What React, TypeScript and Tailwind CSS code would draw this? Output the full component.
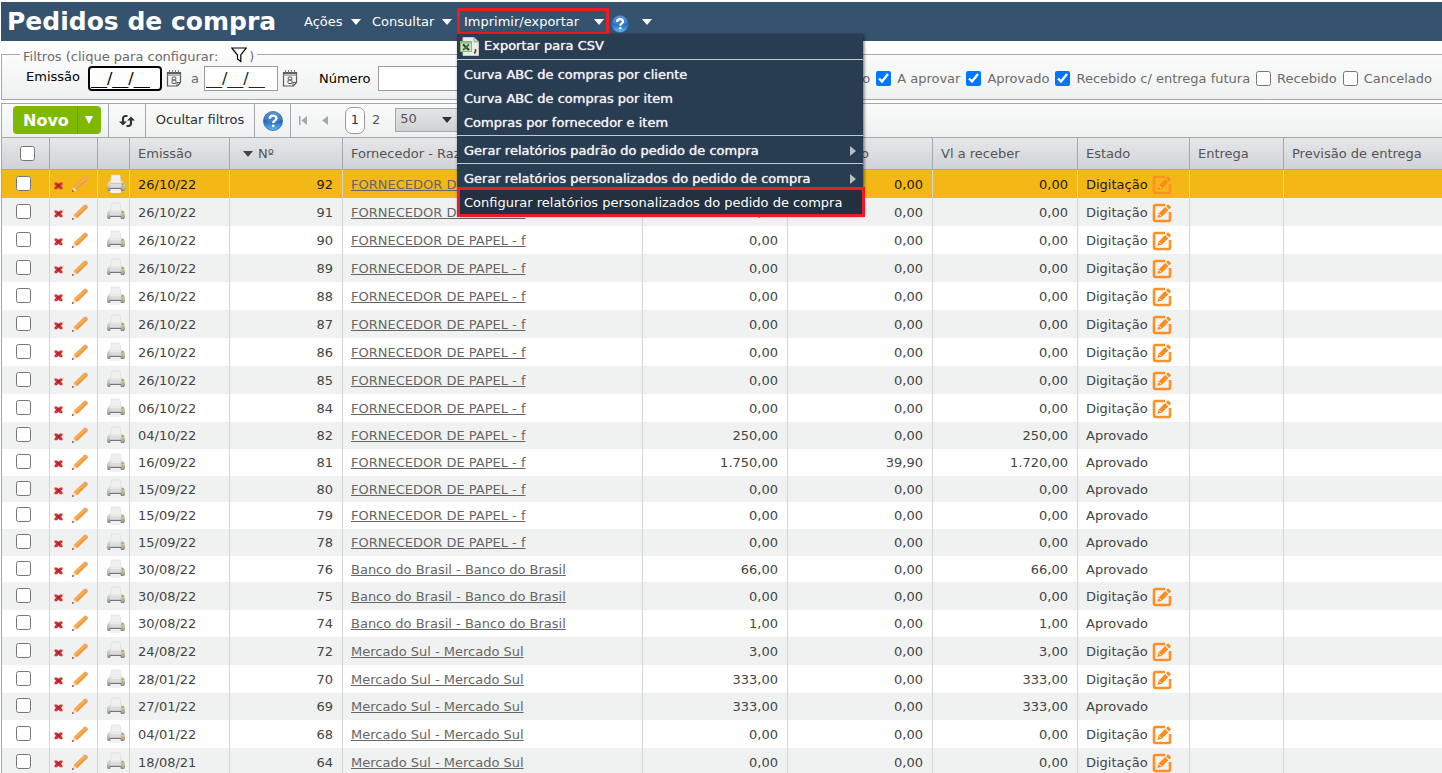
import { useState } from 'react'

interface Order {
  date: string
  number: number
  supplier: string
  total: string
  received: string
  pending: string
  status: 'Digitação' | 'Aprovado'
}

const PAPEL = 'FORNECEDOR DE PAPEL - f'
const BANCO = 'Banco do Brasil - Banco do Brasil'
const MERCADO = 'Mercado Sul - Mercado Sul'

const order = (
  date: string,
  number: number,
  supplier: string,
  status: Order['status'],
  total = '0,00',
  received = '0,00',
  pending = total
): Order => ({ date, number, supplier, total, received, pending, status })

const orders: Order[] = [
  order('26/10/22', 92, PAPEL, 'Digitação'),
  order('26/10/22', 91, PAPEL, 'Digitação'),
  order('26/10/22', 90, PAPEL, 'Digitação'),
  order('26/10/22', 89, PAPEL, 'Digitação'),
  order('26/10/22', 88, PAPEL, 'Digitação'),
  order('26/10/22', 87, PAPEL, 'Digitação'),
  order('26/10/22', 86, PAPEL, 'Digitação'),
  order('26/10/22', 85, PAPEL, 'Digitação'),
  order('06/10/22', 84, PAPEL, 'Digitação'),
  order('04/10/22', 82, PAPEL, 'Aprovado', '250,00'),
  order('16/09/22', 81, PAPEL, 'Aprovado', '1.750,00', '39,90', '1.720,00'),
  order('15/09/22', 80, PAPEL, 'Aprovado'),
  order('15/09/22', 79, PAPEL, 'Aprovado'),
  order('15/09/22', 78, PAPEL, 'Aprovado'),
  order('30/08/22', 76, BANCO, 'Aprovado', '66,00'),
  order('30/08/22', 75, BANCO, 'Digitação'),
  order('30/08/22', 74, BANCO, 'Aprovado', '1,00'),
  order('24/08/22', 72, MERCADO, 'Digitação', '3,00'),
  order('28/01/22', 70, MERCADO, 'Digitação', '333,00'),
  order('27/01/22', 69, MERCADO, 'Aprovado', '333,00'),
  order('04/01/22', 68, MERCADO, 'Digitação'),
  order('18/08/21', 64, MERCADO, 'Digitação')
]

const filters = [
  { label: 'Digitação', checked: true },
  { label: 'A aprovar', checked: true },
  { label: 'Aprovado', checked: true },
  { label: 'Recebido c/ entrega futura', checked: true },
  { label: 'Recebido', checked: false },
  { label: 'Cancelado', checked: false }
]

function Caret({ className = 'fill-white' }: { className?: string }) {
  return (
    <svg viewBox="0 0 10 6" className={`h-[6px] w-[10px] shrink-0 ${className}`} aria-hidden="true">
      <path d="M0 0h10L5 6z" />
    </svg>
  )
}

function HelpIcon({ className }: { className: string }) {
  return (
    <svg viewBox="0 0 20 20" className={className} aria-hidden="true">
      <defs>
        <linearGradient id="help" x1="0" y1="0" x2="0" y2="1">
          <stop offset="0" stopColor="#3f7cc8" />
          <stop offset="0.45" stopColor="#1d5fb8" />
          <stop offset="1" stopColor="#5fbcf5" />
        </linearGradient>
      </defs>
      <circle cx="10" cy="10" r="9.5" fill="url(#help)" stroke="#2a62a8" strokeWidth="0.800" />
      <path d="M1.5 9a8.5 8.5 0 0 1 17 0c-5 2.500-12 2.500-17 0z" fill="#fff" opacity="0.18" />
      <path d="M6.800 7.800c0-4.200 6.600-4.200 6.600-.5 0 2.400-3.200 2.300-3.200 4.700" fill="none" stroke="#fff" strokeWidth="2.400" />
      <circle cx="10.200" cy="14.800" r="1.400" fill="#fff" />
    </svg>
  )
}

function CalendarIcon() {
  return (
    <svg viewBox="0 0 16 17" className="h-[17px] w-4 shrink-0" fill="none" stroke="#5a5a5a" aria-hidden="true">
      <path d="M1.500 2.500h13v10l-3 3.500h-10z" strokeWidth="1.200" fill="#f4f4f4" />
      <path d="M1 3.500h14" strokeWidth="1.600" />
      <path d="M1.500 5.500h13" stroke="#aaa" />
      <path d="M3.500 0v3M6.500 0v3M9.500 0v3M12.500 0v3" stroke="#777" />
      <path d="M11 16v-3.500h3.500" />
      <rect x="6.200" y="7" width="3.600" height="3" rx="1" />
      <rect x="6" y="10" width="4" height="3.500" rx="1" />
    </svg>
  )
}

function CsvIcon() {
  return (
    <svg viewBox="0 0 19 19" className="h-[19px] w-[19px]" aria-hidden="true">
      <path d="M3 .5h11l4.500 4.500v13.500H3z" fill="#ecece9" stroke="#c9c9c4" />
      <path d="M14 .5v4.500h4.500" fill="#d0d0cc" stroke="#a5a5a0" />
      <rect x="0.500" y="4.500" width="11" height="10" fill="#cfe4bd" stroke="#8fb876" />
      <path d="M1 6h10" stroke="#6f9e58" />
      <path d="M3 7.500l6 5.500" stroke="#24452a" strokeWidth="2.200" />
      <path d="M9 7.500l-6 5.500" stroke="#3c7440" strokeWidth="1.800" />
      <path d="M15.500 12v2.500l-1.200 2" fill="none" stroke="#444" strokeWidth="1.600" />
    </svg>
  )
}

function DeleteIcon() {
  return (
    <svg viewBox="0 0 9 9" className="h-[9px] w-[9px]" aria-hidden="true">
      <path d="M.5 1.500h2.500l1.500 1.300L6 1.500h2.500v2L7 4.700l1.500 1.500v2H6L4.500 6.800 3 8.200H.5v-2L2 4.700.5 3.500z" fill="#cf3338" />
      <path d="M3.300 3.300h2.400v2.600H3.300z" fill="#a8202c" />
    </svg>
  )
}

function PencilIcon() {
  return (
    <svg viewBox="0 0 18 17" className="h-[17px] w-[18px]" aria-hidden="true">
      <path d="M1 15.800l1.600-4.900 3.500 3.400z" fill="#f9e0bd" />
      <path d="M.8 16l.8-2.300 1.600 1.600z" fill="#8f3b3b" />
      <path d="M2.600 10.900L13 1.300c1.800-1.400 4.500.9 3.400 3L6.100 14.300z" fill="#f29a3c" />
      <path d="M3.200 11.500L13.600 1.900l1 1L4.200 12.500z" fill="#fbb45c" />
      <path d="M13 1.300c1.800-1.400 4.500.9 3.400 3l-1 .9-3.400-3z" fill="#eba56f" />
    </svg>
  )
}

function PrinterIcon() {
  return (
    <svg viewBox="0 0 20 20" className="h-5 w-5" aria-hidden="true">
      <defs>
        <linearGradient id="printer" x1="0" y1="0" x2="0" y2="1">
          <stop offset="0" stopColor="#e3e3e3" />
          <stop offset="0.500" stopColor="#c6c6c8" />
          <stop offset="1" stopColor="#88888c" />
        </linearGradient>
      </defs>
      <path d="M5.500 1h8.500l1 8h-10.500z" fill="#f0f0f0" stroke="#dadada" strokeWidth="0.600" />
      <path d="M3.500 7.500h1.500l-.5 2.500h10.500l-.5-2.500h2l2.500 3v5l-1 1.500H2l-1-1.500v-5z" fill="url(#printer)" />
      <path d="M4.500 9.800h10.300v3.700H4z" fill="#dcdcde" />
      <path d="M4 14h11l.5 2.500h-12z" fill="#77777b" />
      <path d="M4.500 15h10l.8 3.500c-3 .8-8.500.8-11.500 0z" fill="#f0f0f0" />
      <rect x="15.500" y="9" width="2.200" height="2.200" fill="#7fc25e" />
      <rect x="15.500" y="12" width="2.200" height="2.200" fill="#f2ab3a" />
    </svg>
  )
}

function EditIcon() {
  return (
    <svg viewBox="0 0 20 20" className="h-5 w-5" aria-hidden="true">
      <path d="M13 2H3.500A1.500 1.500 0 0 0 2 3.500v13A1.500 1.500 0 0 0 3.500 18h13a1.500 1.500 0 0 0 1.500-1.500V9" fill="none" stroke="#ff9023" strokeWidth="2.600" />
      <path d="M5.300 15l1.400-4.500 6.400-6.400 3.200 3.200-6.500 6.400z" fill="#ff8c1a" />
      <path d="M14 3.200l1.400-1.400c.4-.4.900-.4 1.300 0l1.900 1.900c.4.400.4.900 0 1.300l-1.400 1.400z" fill="#ff8c1a" />
      <path d="M7.200 11.200l2 2" stroke="#fff" strokeWidth="0.800" />
    </svg>
  )
}

function MenuItem({ children, submenu = false }: { children: React.ReactNode; submenu?: boolean }) {
  return (
    <button className="flex h-6 w-full items-center px-[7px] pt-[2px] text-left whitespace-nowrap [text-shadow:0_0_1px_#ffffff]">
      {children}
      {submenu && (
        <svg viewBox="0 0 6 10" className="ml-auto h-[10px] w-[6px] fill-[#b9bec4]" aria-hidden="true">
          <path d="M0 0l6 5-6 5z" />
        </svg>
      )}
    </button>
  )
}

function MenuSeparator() {
  return <div className="mt-px mb-[2px] h-px bg-[#c3c9cf]" />
}

function TopBar() {
  return (
    <header className="relative z-10 ml-px flex h-[39px] items-center bg-[#35526f] pl-[6px] whitespace-nowrap text-white">
      <h1 className="w-[297px] text-[25px] font-bold">Pedidos de compra</h1>
      <button className="flex w-[68px] items-center gap-2">
        Ações <Caret />
      </button>
      <button className="flex w-[85px] items-center gap-2">
        Consultar <Caret />
      </button>
      <div className="relative">
        <button className="flex h-[27px] w-[152px] items-center justify-between border-[3px] border-[#ed1c24] pr-[2px] pl-1">
          Imprimir/exportar <Caret />
        </button>
        <div className="absolute top-[26px] left-0 w-[406px] bg-[#283c52] pb-px text-[#f0f0f0] shadow-[1px_1px_3px_rgba(0,0,0,0.6)]">
          <button className="flex h-6 w-full items-center gap-[5px] pl-[3px] [text-shadow:0_0_1px_#ffffff]">
            <CsvIcon /> Exportar para CSV
          </button>
          <MenuSeparator />
          <MenuItem>Curva ABC de compras por cliente</MenuItem>
          <MenuItem>Curva ABC de compras por item</MenuItem>
          <MenuItem>Compras por fornecedor e item</MenuItem>
          <MenuSeparator />
          <MenuItem submenu>Gerar relatórios padrão do pedido de compra</MenuItem>
          <MenuSeparator />
          <MenuItem submenu>Gerar relatórios personalizados do pedido de compra</MenuItem>
          <button className="-my-[3px] flex h-[30px] w-[408px] items-center border-[3px] border-[#ed1c24] bg-[#22303f] pt-[2px] pl-1 text-left whitespace-nowrap text-white">
            Configurar relatórios personalizados do pedido de compra
          </button>
        </div>
      </div>
      <button className="ml-[2px] flex items-center gap-[13px]" aria-label="Ajuda">
        <HelpIcon className="mt-1 h-[18px] w-[18px]" />
        <Caret />
      </button>
    </header>
  )
}

function FilterBar() {
  return (
    <fieldset className="mt-[3px] ml-px min-w-0 border border-r-0 border-[#a1a8b0] bg-linear-to-b from-[#fbfbfb] to-[#eff1f1] whitespace-nowrap text-[#6b6b6b]">
      <legend className="ml-[18px] flex h-[21px] items-center px-[3px] pt-1">
        Filtros (clique para configurar:
        <button className="mr-[2px] ml-[13px]" aria-label="Configurar filtros">
          <svg viewBox="0 0 16 16" className="mb-[3px] h-4 w-4 fill-white stroke-black" strokeWidth="1.200" aria-hidden="true">
            <path d="M.8 1h14.400L9.800 8v6.500L6.500 12V8z" />
          </svg>
        </button>
        )
      </legend>
      <div className="flex h-[34px] items-center pr-[10px] pb-[7px] pl-6">
        <label htmlFor="date-from" className="mr-2 pb-1 text-black">Emissão</label>
        <input id="date-from" defaultValue="__/__/__" className="h-[25px] w-[74px] rounded border-2 border-black bg-white px-px text-[16px] text-black" />
        <button className="mx-1" aria-label="Abrir calendário inicial"><CalendarIcon /></button>
        <label htmlFor="date-to" className="mx-[5px]">a</label>
        <input id="date-to" defaultValue="__/__/__" className="h-[25px] w-[74px] border border-[#9a9a9a] bg-white px-px text-[16px] text-[#222222]" />
        <button className="mx-1" aria-label="Abrir calendário final"><CalendarIcon /></button>
        <label htmlFor="number" className="mr-[7px] ml-[17px] text-black">Número</label>
        <input id="number" className="h-[25px] w-[120px] border border-[#9a9a9a] bg-white" />
        <div className="ml-auto flex gap-[6px]">
          {filters.map((filter) => (
            <label key={filter.label} className="flex items-center gap-[6px]">
              <input type="checkbox" defaultChecked={filter.checked} className="h-[15px] w-[15px]" />
              {filter.label}
            </label>
          ))}
        </div>
      </div>
    </fieldset>
  )
}

function Toolbar() {
  return (
    <div className="flex h-[33px] items-stretch bg-linear-to-b from-[#fafafa] to-[#eff1f1] whitespace-nowrap text-[#2f2f2f]">
      <div className="flex w-[107px] items-center border-r border-[#a1a8b0] pb-px pl-[11px]">
        <button className="h-7 rounded-l bg-[#7fb800] pr-2 pl-[10px] pt-px text-[16px] font-bold text-white">Novo</button>
        <button className="flex h-7 w-6 items-center justify-center rounded-r border-l border-[#6ba000] bg-[#7fb800]" aria-label="Mais opções">
          <svg viewBox="0 0 8 8" className="h-2 w-2 fill-white" aria-hidden="true"><path d="M0 0h8L4 8z" /></svg>
        </button>
      </div>
      <button className="flex w-[37px] items-center justify-center border-r border-[#a1a8b0]" aria-label="Atualizar">
        <svg viewBox="0 0 18 14" className="h-[14px] w-[18px]" fill="none" stroke="#333" strokeWidth="2.200" aria-hidden="true">
          <path d="M9.500 2H7.500a2.500 2.500 0 0 0-2.500 2.500V9" />
          <path d="M8.500 12h2a2.500 2.500 0 0 0 2.500-2.500V5" />
          <path d="M1 7.500h8l-4 4z" fill="#333" stroke="none" />
          <path d="M9 6.500h8L13 2.500z" fill="#333" stroke="none" />
        </svg>
      </button>
      <button className="w-[109px] border-r border-[#a1a8b0] pb-px">Ocultar filtros</button>
      <button className="flex w-9 items-center justify-center border-r border-[#a1a8b0]" aria-label="Ajuda">
        <HelpIcon className="h-5 w-5" />
      </button>
      <button className="flex w-6 items-center justify-center" aria-label="Primeira página">
        <svg viewBox="0 0 8 9" className="h-[9px] w-2 fill-[#a3a9af]" aria-hidden="true">
          <path d="M0 0h1.500v9H0zM8 0v9L2.500 4.500z" />
        </svg>
      </button>
      <button className="flex w-5 items-center justify-center" aria-label="Página anterior">
        <svg viewBox="0 0 6 9" className="h-[9px] w-[6px] fill-[#a3a9af]" aria-hidden="true">
          <path d="M6 0v9L0 4.500z" />
        </svg>
      </button>
      <div className="flex items-center gap-[7px] pb-px pl-[10px] text-[#555555]">
        <button className="h-[27px] w-5 rounded-[7px] border border-[#999999] bg-white text-[#333333]">1</button>
        <button>2</button>
        <div className="relative ml-2 flex items-center">
          <select aria-label="Registros por página" className="h-6 w-[66px] appearance-none border border-[#a1a8b0] bg-linear-to-b from-[#e4e5e6] to-[#cfd2d5] pb-[2px] pl-1 text-[#555555]">
            <option>50</option>
            <option>100</option>
          </select>
          <Caret className="pointer-events-none absolute right-[9px] fill-[#333333]" />
        </div>
      </div>
    </div>
  )
}

function OrdersTable() {
  const [selected] = useState(92)
  const head = 'h-8 border-r border-b border-[#a1a8b0] px-2 py-0 text-left font-normal'
  const cell = 'border-r border-[#d2d6da] px-2 pt-px pb-0'
  const amount = 'border-r border-[#d2d6da] px-[9px] pt-px pb-0 text-right'

  return (
    <table className="w-full table-fixed border-separate border-spacing-0 leading-5 whitespace-nowrap">
      <colgroup>
        <col className="w-12" />
        <col className="w-12" />
        <col className="w-8" />
        <col className="w-[100px]" />
        <col className="w-[113px]" />
        <col className="w-[300px]" />
        <col className="w-[145px]" />
        <col className="w-[145px]" />
        <col className="w-[145px]" />
        <col className="w-28" />
        <col className="w-[94px]" />
        <col />
      </colgroup>
      <thead className="bg-linear-to-b from-[#e6e7e9] to-[#cfd2d7] text-[#555555]">
        <tr>
          <th className={head}>
            <input type="checkbox" aria-label="Selecionar todos" className="ml-[10px] block h-[15px] w-[15px]" />
          </th>
          <th className={head}></th>
          <th className={head}></th>
          <th className={head}>Emissão</th>
          <th className={head}>
            <span className="flex items-center gap-[5px] pl-[5px]">
              <Caret className="fill-[#444444]" /> Nº
            </span>
          </th>
          <th className={head}>Fornecedor - Razão social</th>
          <th className={head}>Vl total</th>
          <th className={head}>Vl recebido</th>
          <th className={head}>Vl a receber</th>
          <th className={head}>Estado</th>
          <th className={head}>Entrega</th>
          <th className="h-8 border-b border-[#a1a8b0] px-2 py-0 text-left font-normal">Previsão de entrega</th>
        </tr>
      </thead>
      <tbody>
        {orders.map((row) => {
          const height = row.status === 'Digitação' ? 'h-7' : 'h-[27px] nth-[3n]:h-[26px]'
          const color = row.number === selected ? 'bg-[#f4b816] text-[#1a1a1a]' : 'text-[#444444] odd:bg-white even:bg-[#f0f2f2]'
          return (
            <tr key={row.number} className={`${height} ${color}`}>
              <td className={cell}>
                <input type="checkbox" aria-label={`Selecionar pedido ${row.number}`} className="mb-[3px] ml-[6px] block h-[15px] w-[15px]" />
              </td>
              <td className="border-r border-[#d2d6da] p-0">
                <div className="flex items-center gap-2 pl-1">
                  <button aria-label="Excluir" className="pt-[2px]"><DeleteIcon /></button>
                  <button aria-label="Editar"><PencilIcon /></button>
                </div>
              </td>
              <td className="border-r border-[#d2d6da] p-0">
                <button className="ml-2 block" aria-label="Imprimir"><PrinterIcon /></button>
              </td>
              <td className={cell}>{row.date}</td>
              <td className={amount}>{row.number}</td>
              <td className={cell}>
                <a href="#" className="text-[#666666] underline">{row.supplier}</a>
              </td>
              <td className={amount}>{row.total}</td>
              <td className={amount}>{row.received}</td>
              <td className={amount}>{row.pending}</td>
              <td className={cell}>
                {row.status === 'Digitação' ? (
                  <div className="flex items-center gap-1">
                    <span>{row.status}</span>
                    <button aria-label="Abrir digitação"><EditIcon /></button>
                  </div>
                ) : (
                  row.status
                )}
              </td>
              <td className={cell}></td>
              <td></td>
            </tr>
          )
        })}
      </tbody>
    </table>
  )
}

export default function App() {
  return (
    <div className="h-screen overflow-hidden bg-white pt-[2px] font-['Verdana','DejaVu_Sans',sans-serif] text-[13px]">
      <TopBar />
      <FilterBar />
      <main className="mt-[3px] ml-px border-t border-l border-[#a1a8b0]">
        <Toolbar />
        <div className="border-t border-[#a1a8b0]">
          <OrdersTable />
        </div>
      </main>
    </div>
  )
}
